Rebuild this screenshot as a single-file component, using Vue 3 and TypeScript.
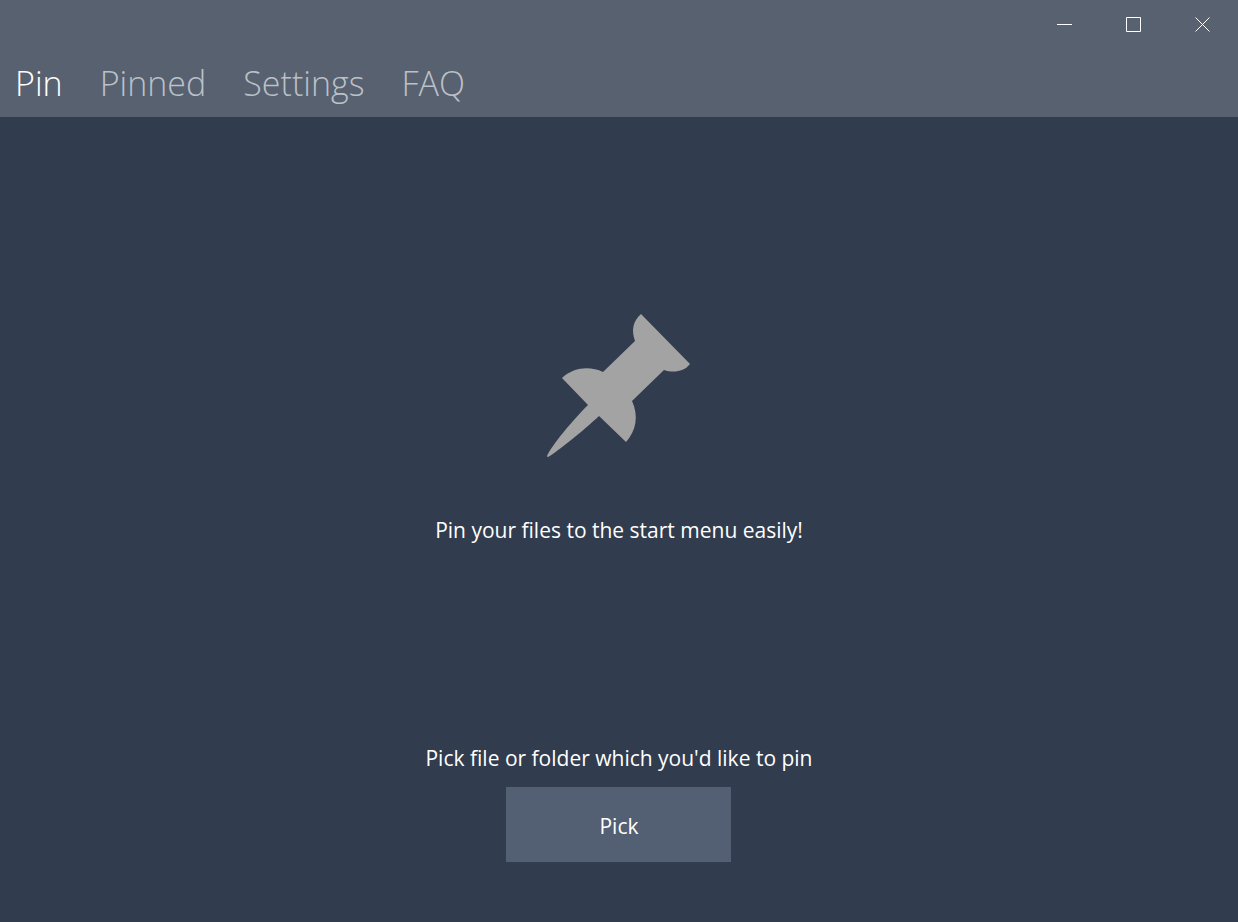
<script setup lang="ts">
import { ref } from 'vue'

const tabs: string[] = ['Pin', 'Pinned', 'Settings', 'FAQ']
const active = ref<string>('Pin')
</script>

<template>
  <div class="window">
    <header class="header">
      <div class="titlebar">
        <button class="caption" type="button" aria-label="Minimize">
          <svg viewBox="0 0 16 16"><path d="M0 8.5H15" /></svg>
        </button>
        <button class="caption" type="button" aria-label="Maximize">
          <svg viewBox="0 0 16 16"><path d="M.5 1.5H14.5V15.5H.5Z" /></svg>
        </button>
        <button class="caption" type="button" aria-label="Close">
          <svg viewBox="0 0 16 16"><path d="M.5 1.5L14.5 15.5M14.5 1.5L.5 15.5" /></svg>
        </button>
      </div>
      <nav class="tabs">
        <button
          v-for="tab in tabs"
          :key="tab"
          type="button"
          class="tab"
          :class="{ active: tab === active }"
          @click="active = tab"
        >{{ tab }}</button>
      </nav>
    </header>
    <main class="content">
      <section class="hero">
        <svg class="pin" viewBox="0 0 144 144" aria-hidden="true">
          <path d="M94 0L143 50C137 58 126 59 117 56L85 87C92 102 89 117 79 128L52 102C36 117 10 138 1 143Q0 143 0 142C5 131 25 107 41 91L15 64C27 53 43 52 56 58L88 27C84 16 86 7 94 0Z" />
        </svg>
        <p>Pin your files to the start menu easily!</p>
      </section>
      <section class="picker">
        <p id="pick-label">Pick file or folder which you'd like to pin</p>
        <button class="pick" type="button" aria-describedby="pick-label">Pick</button>
      </section>
    </main>
  </div>
</template>

<style>
body { margin: 0; background: #313c4e; }
</style>

<style scoped>
.window {
  display: flex;
  flex-direction: column;
  min-height: 100vh;
  background: #313c4e;
  color: #fff;
  font-family: "Segoe UI", "Open Sans", "Noto Sans", sans-serif;
}
button { border: 0; padding: 0; background: none; color: inherit; font: inherit; }
p { margin: 0; }
.header { background: #58616f; }
.titlebar { display: flex; justify-content: flex-end; height: 48px; padding-right: 1px; }
.caption { display: flex; align-items: center; justify-content: center; width: 69px; height: 48px; }
.caption svg { width: 16px; height: 16px; fill: none; stroke: #fff; stroke-width: 1; }
.tabs { display: flex; gap: 37px; padding-left: 15px; }
.tab { height: 69px; font-size: 34px; font-weight: 350; line-height: 70px; color: #bbc0c9; }
.tab.active { color: #fff; }
.content { flex: 1; display: flex; flex-direction: column; align-items: center; font-size: 21px; line-height: 30px; }
.hero { flex: 1; display: flex; flex-direction: column; align-items: center; justify-content: center; gap: 57px; padding-bottom: 2px; }
.pin { width: 144px; height: 144px; fill: #a3a3a3; }
.picker { display: flex; flex-direction: column; align-items: center; gap: 14px; padding-bottom: 60px; }
.pick { width: 225px; height: 75px; padding-top: 2px; background: #535f73; }
</style>
